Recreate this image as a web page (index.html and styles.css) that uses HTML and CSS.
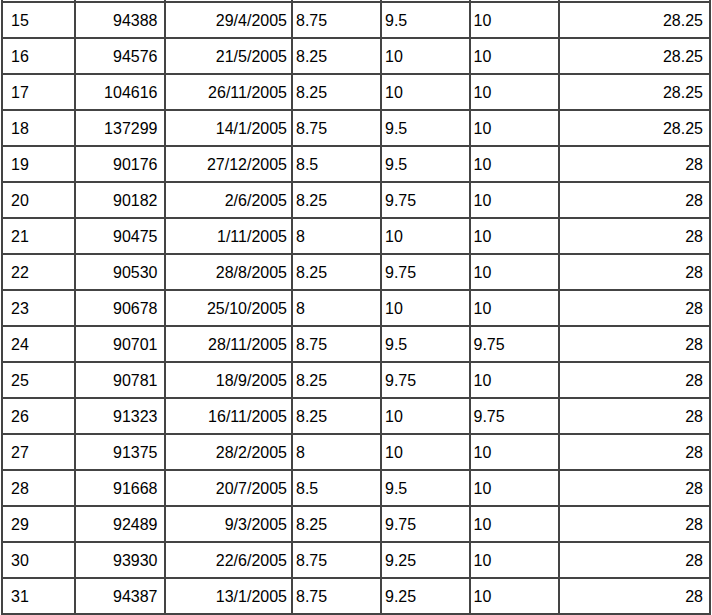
FILE: index.html
```html
<!DOCTYPE html>
<html>
<head>
<meta charset="utf-8">
<link rel="stylesheet" href="styles.css">
</head>
<body>
<div class="viewport">
<table class="grades">
<colgroup>
<col class="c-rank"><col class="c-id"><col class="c-date"><col class="c-a"><col class="c-b"><col class="c-c"><col class="c-total">
</colgroup>
<tbody>
<tr class="stub"><td></td><td></td><td></td><td></td><td></td><td></td><td></td></tr>
<tr><td>15</td><td class="r">94388</td><td class="r d">29/4/2005</td><td>8.75</td><td>9.5</td><td>10</td><td class="r">28.25</td></tr>
<tr><td>16</td><td class="r">94576</td><td class="r d">21/5/2005</td><td>8.25</td><td>10</td><td>10</td><td class="r">28.25</td></tr>
<tr><td>17</td><td class="r">104616</td><td class="r d">26/11/2005</td><td>8.25</td><td>10</td><td>10</td><td class="r">28.25</td></tr>
<tr><td>18</td><td class="r">137299</td><td class="r d">14/1/2005</td><td>8.75</td><td>9.5</td><td>10</td><td class="r">28.25</td></tr>
<tr><td>19</td><td class="r">90176</td><td class="r d">27/12/2005</td><td>8.5</td><td>9.5</td><td>10</td><td class="r">28</td></tr>
<tr><td>20</td><td class="r">90182</td><td class="r d">2/6/2005</td><td>8.25</td><td>9.75</td><td>10</td><td class="r">28</td></tr>
<tr><td>21</td><td class="r">90475</td><td class="r d">1/11/2005</td><td>8</td><td>10</td><td>10</td><td class="r">28</td></tr>
<tr><td>22</td><td class="r">90530</td><td class="r d">28/8/2005</td><td>8.25</td><td>9.75</td><td>10</td><td class="r">28</td></tr>
<tr><td>23</td><td class="r">90678</td><td class="r d">25/10/2005</td><td>8</td><td>10</td><td>10</td><td class="r">28</td></tr>
<tr><td>24</td><td class="r">90701</td><td class="r d">28/11/2005</td><td>8.75</td><td>9.5</td><td>9.75</td><td class="r">28</td></tr>
<tr><td>25</td><td class="r">90781</td><td class="r d">18/9/2005</td><td>8.25</td><td>9.75</td><td>10</td><td class="r">28</td></tr>
<tr><td>26</td><td class="r">91323</td><td class="r d">16/11/2005</td><td>8.25</td><td>10</td><td>9.75</td><td class="r">28</td></tr>
<tr><td>27</td><td class="r">91375</td><td class="r d">28/2/2005</td><td>8</td><td>10</td><td>10</td><td class="r">28</td></tr>
<tr><td>28</td><td class="r">91668</td><td class="r d">20/7/2005</td><td>8.5</td><td>9.5</td><td>10</td><td class="r">28</td></tr>
<tr><td>29</td><td class="r">92489</td><td class="r d">9/3/2005</td><td>8.25</td><td>9.75</td><td>10</td><td class="r">28</td></tr>
<tr><td>30</td><td class="r">93930</td><td class="r d">22/6/2005</td><td>8.75</td><td>9.25</td><td>10</td><td class="r">28</td></tr>
<tr><td>31</td><td class="r">94387</td><td class="r d">13/1/2005</td><td>8.75</td><td>9.25</td><td>10</td><td class="r">28</td></tr>
</tbody>
</table>
</div>
</body>
</html>
```
FILE: styles.css
```css
html, body {
  margin: 0;
  padding: 0;
  background: #fff;
}
.viewport {
  width: 712px;
  height: 615px;
  overflow: hidden;
}
.grades {
  border-collapse: collapse;
  table-layout: fixed;
  width: 708px;
  margin: -35px 0 0 1px;
  font-family: "Liberation Sans", Arial, sans-serif;
  font-size: 16px;
  color: #000;
}
.grades td {
  border: 2px solid #444;
  padding: 9px 3px 7px 3px;
  line-height: 18px;
  height: 18px;
  white-space: nowrap;
  overflow: hidden;
}
.grades td:first-child {
  padding-left: 8px;
}
.grades td.r {
  text-align: right;
  padding-right: 6px;
}
.grades td.d {
  padding-right: 4px;
}
.grades td:last-child {
  padding-right: 6px;
}
.c-rank { width: 73px; }
.c-id { width: 89.5px; }
.c-date { width: 127.5px; }
.c-a { width: 89px; }
.c-b { width: 88.5px; }
.c-c { width: 89.5px; }
.c-total { width: 151px; }
```
